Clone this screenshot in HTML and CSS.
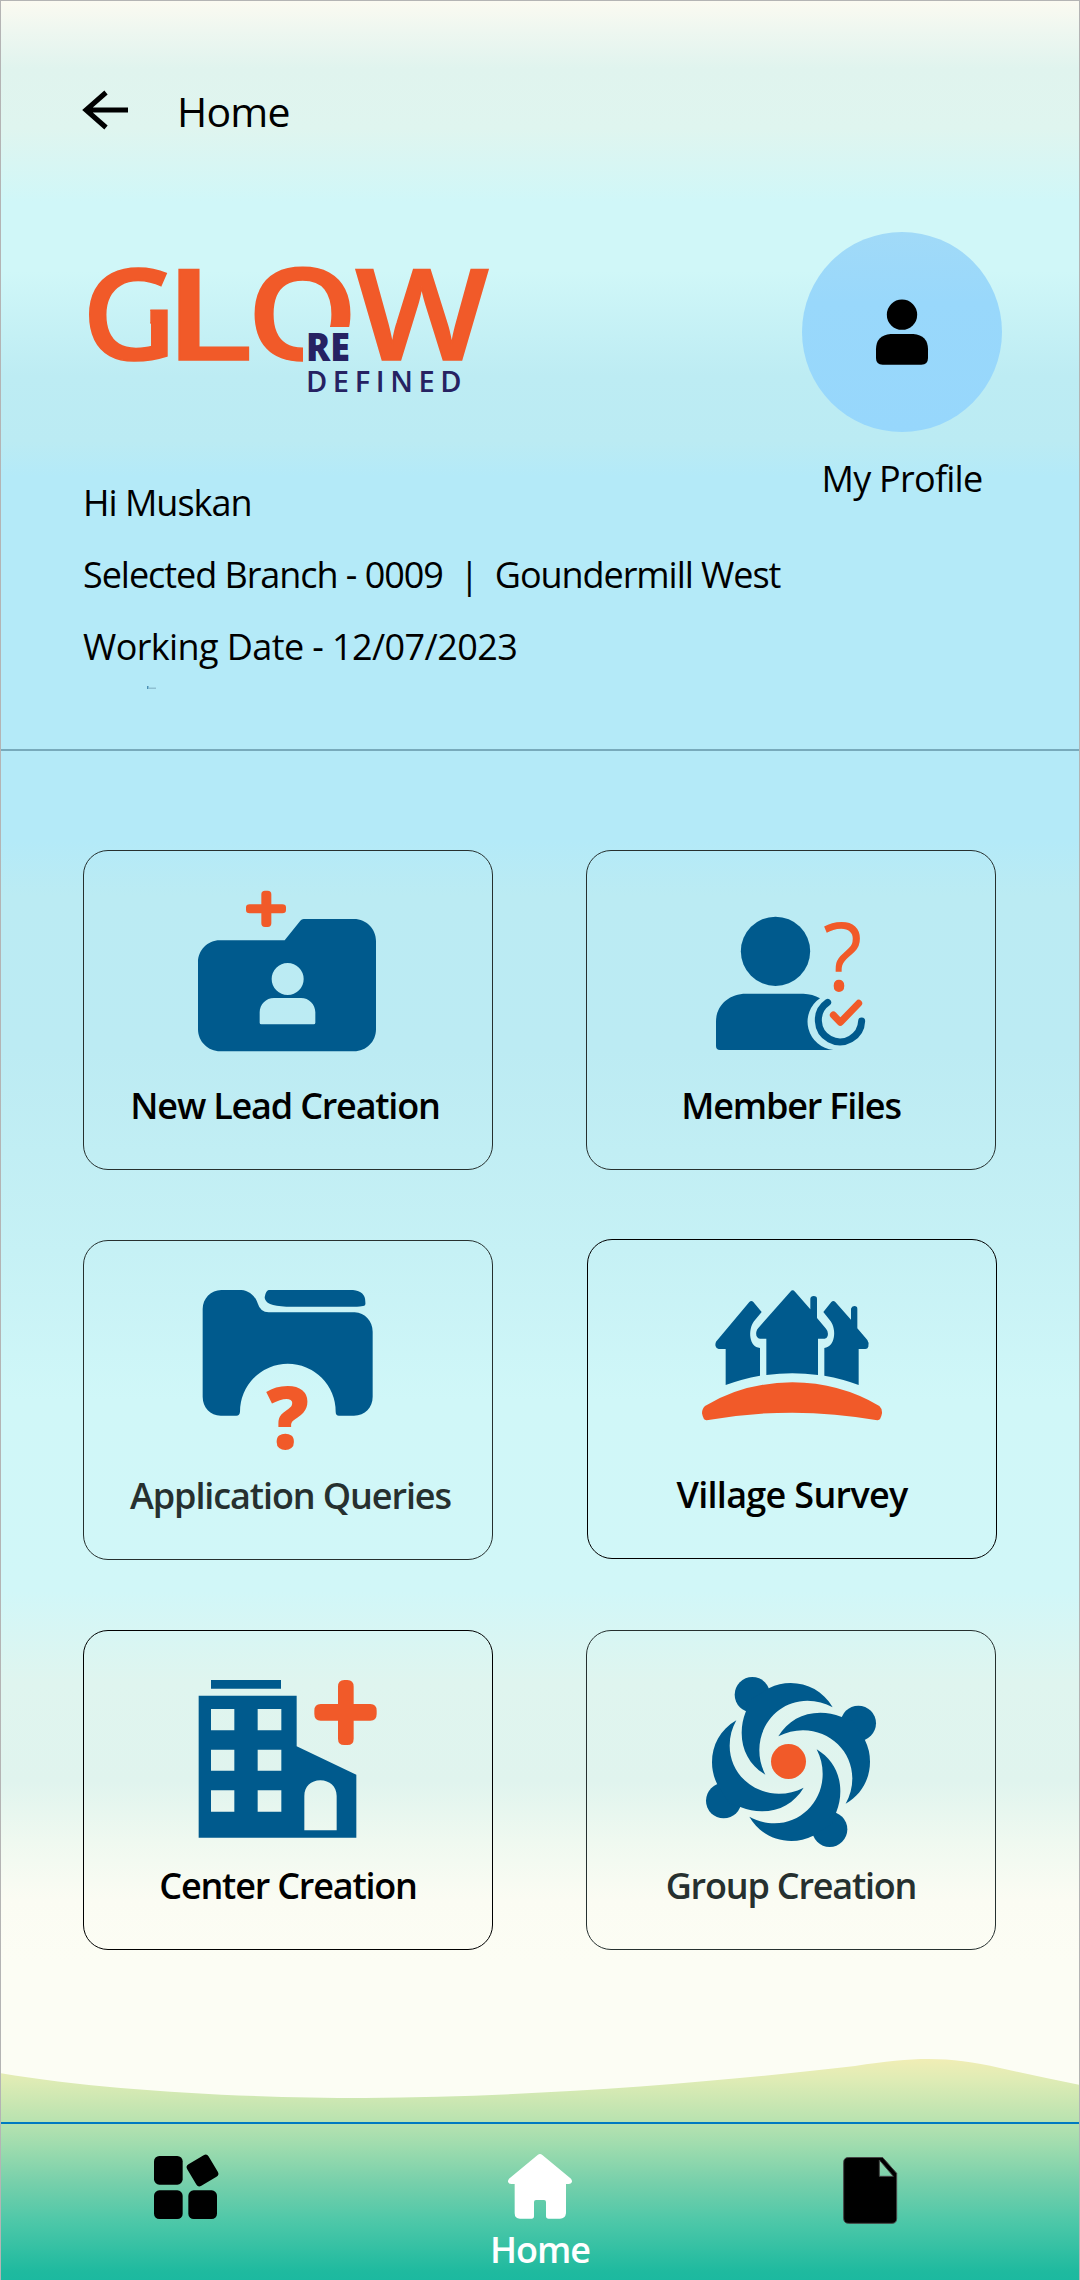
FILE: index.html
```
<!DOCTYPE html>
<html lang="en">

<head>
	<meta charset="utf-8" />
	<meta name="viewport" content="width=device-width" />
	<title>Home</title>
	<link rel="stylesheet" href="styles.css">
</head>

<body>
	<div class="page">
		<header class="topbar">
			<svg class="back" viewBox="0 0 46 40" width="46" height="40">
				<path d="M45 20H4M23 2.500L3 20l20 17.500" fill="none" stroke="#000" stroke-width="5" />
			</svg>
			<h1>Home</h1>
		</header>

		<section class="intro">
			<div class="intro-main">
				<svg class="logo" viewBox="83 260 410 140" width="410" height="140">
					<clipPath id="g-cut"><path d="M70 250H180V380H70ZM125 300V334H150.300V300Z" clip-rule="evenodd" /></clipPath>
					<clipPath id="o-cut"><path d="M240 250H360V327H303V380H240Z" /></clipPath>
					<g class="logo-glow">
						<text x="82" y="360" textLength="95" lengthAdjust="spacingAndGlyphs" clip-path="url(#g-cut)">G</text>
						<text x="164" y="360" textLength="89" lengthAdjust="spacingAndGlyphs">L</text>
						<text x="247" y="360" textLength="111" lengthAdjust="spacingAndGlyphs" clip-path="url(#o-cut)">O</text>
						<text x="355" y="360" textLength="134" lengthAdjust="spacingAndGlyphs">W</text>
					</g>
					<text class="logo-re" x="306" y="361" textLength="44" lengthAdjust="spacingAndGlyphs">RE</text>
					<text class="logo-defined" x="306" y="392">DEFINED</text>
				</svg>
				<p class="hi">Hi Muskan</p>
				<p class="branch">Selected Branch - 0009&nbsp; |&nbsp; Goundermill West</p>
				<p class="date">Working Date - 12/07/2023</p>
				<svg class="speck" viewBox="0 0 10 4" width="10" height="4">
					<path d="M0 0h1.500v3H0z" fill="#4a90b4" />
					<path d="M2 1.500h7v1.500H2z" fill="#8fc0d2" />
				</svg>
			</div>
			<div class="profile">
				<div class="avatar">
					<svg viewBox="348 296 156 196" width="52" height="66">
						<circle cx="426" cy="342" r="45.500" />
						<path d="M392 400H460Q504 404 504 446V472Q504 492 484 492H368Q348 492 348 472V446Q348 404 392 400Z" />
					</svg>
				</div>
				<span>My Profile</span>
			</div>
		</section>

		<main class="cards">
			<a class="card">
				<svg class="icon" viewBox="43 63 1224 660">
					<path class="blue" fill-rule="evenodd" d="M450 331H645L692 272Q696 267 702 267H853C890 267 919 297 919 333V598C919 635 890 664 853 664H452C415 664 385 635 385 598V397C385 361 414 331 450 331ZM654 399A48 48 0 1 0 654 495A48 48 0 1 0 654 399ZM613 504C589 504 570 523 570 547V578Q570 583 575 583H732Q737 583 737 578V547C737 523 718 504 694 504Z" />
					<path class="orange" d="M575 193Q575 182 586 182H594Q605 182 605 193V223H638Q649 223 649 232V240Q649 250 638 250H605V280Q605 291 594 291H586Q575 291 575 280V250H540Q529 250 529 240V232Q529 223 540 223H575Z" />
				</svg>
				<span class="label lead">New Lead Creation</span>
			</a>
			<a class="card">
				<svg class="icon" viewBox="51 63 1224 660">
					<circle class="blue" cx="616.500" cy="364" r="104" />
					<path class="blue" d="M438 575C438 525 478 491 528 491H700Q728 492 750 505A85 85 0 0 0 790 660H450Q438 660 438 648Z" />
					<path class="ring" d="M773 517A65 65 0 1 0 875 573" />
					<path class="check" d="M790 555L811 577L866 520" />
					<text class="mark thin" x="758" y="483" textLength="119" lengthAdjust="spacingAndGlyphs">?</text>
				</svg>
				<span class="label member">Member Files</span>
			</a>
			<a class="card">
				<svg class="icon" viewBox="43 63 1224 660">
					<path class="blue" d="M455 210H515C540 212 558 230 564 250Q572 277 597 277H855C886 279 909 303 909 335V530C909 562 886 587 853 587H808Q798 587 798 575A143.500 143.500 0 0 0 511 575Q510 587 500 587H453C422 587 399 562 399 530V267C399 235 424 211 455 210Z" />
					<path class="blue" d="M597 210H850Q887 214 887 245Q889 258 880 258Q870 260 862 260H650Q585 258 585 232Q588 212 597 210Z" />
					<text class="mark heavy" x="590" y="686" textLength="128" lengthAdjust="spacingAndGlyphs">?</text>
				</svg>
				<span class="label queries">Application Queries</span>
			</a>
			<a class="card village">
				<svg class="icon" viewBox="54 60 1224 660">
					<path class="blue" d="M661 215Q668 207 675 215L721 268V236Q722 228 731 228Q741 228 741 236V294L768 326Q776 335 773 348Q770 356 764 356H744V465Q667 455 589 465V356H570Q556 353 559 335Q561 328 565 324Z" />
					<path class="blue" d="M538 246Q544 240 550 246L575 276L552 304C533 330 537 382 570 384V467Q515 477 467 495V387H446Q431 382 438 365Z" />
					<path class="blue" d="M784 246Q790 240 796 246L843 299V266Q845 258 853 258Q862 258 862 266V325L892 360Q899 370 895 380Q893 387 886 387H866V495Q820 477 763 467V384C796 380 800 330 782 304L760 276Z" />
					<path class="orange" d="M405 558Q520 488 667 487Q810 488 928 558Q937 566 936 580Q932 602 922 601Q667 555 410 601Q400 602 396 580Q396 566 405 558Z" />
				</svg>
				<span class="label survey">Village Survey</span>
			</a>
			<a class="card center">
				<svg class="icon" viewBox="43 63 1224 660">
					<path class="blue" d="M424 210H634V236H424Z" />
					<path class="blue" fill-rule="evenodd" d="M387 257H681V409L860 494V683H387ZM424 297H494V361H424ZM564 297H635V361H564ZM424 419H494V482H424ZM564 419H635V482H564ZM424 541H494V605H424ZM564 541H635V605H564ZM704 661V558C704 530 724 511 752 511S801 530 801 558V661Z" />
					<path class="orange" d="M805 230Q805 210 824 210H833Q852 210 852 230V282H902Q921 282 921 302V312Q921 332 902 332H852V386Q852 405 833 405H824Q805 405 805 386V332H753Q734 332 734 312V302Q734 282 753 282H805Z" />
				</svg>
				<span class="label">Center Creation</span>
			</a>
			<a class="card">
				<svg class="icon" viewBox="51 63 1224 660">
					<defs>
						<g id="person">
							<circle cx="547" cy="254" r="53" />
							<path d="M540 270L598 234Q628 219 662 219C712 219 760 243 788 292C765 279 740 272 712 272C632 272 568 338 568 420C568 446 574 470 586 494C540 466 515 422 515 368Q515 336 527 306Z" />
						</g>
					</defs>
					<g class="blue">
						<use href="#person" />
						<use href="#person" transform="rotate(90 663 456)" />
						<use href="#person" transform="rotate(180 663 456)" />
						<use href="#person" transform="rotate(270 663 456)" />
					</g>
					<circle class="orange" cx="655.500" cy="454.500" r="52.500" />
				</svg>
				<span class="label group">Group Creation</span>
			</a>
		</main>

		<footer class="footer">
			<svg class="hills" viewBox="0 2056 1080 224" width="1080" height="224">
				<defs>
					<linearGradient id="grass" gradientUnits="userSpaceOnUse" x1="0" y1="2056" x2="0" y2="2280">
						<stop offset="0" stop-color="#f3eeb5" />
						<stop offset="0.100" stop-color="#e0ecb5" />
						<stop offset="0.280" stop-color="#bbe3b0" />
						<stop offset="0.400" stop-color="#9fdcae" />
						<stop offset="0.560" stop-color="#78d0ab" />
						<stop offset="0.750" stop-color="#4bc7a8" />
						<stop offset="0.960" stop-color="#1fba9f" />
						<stop offset="1" stop-color="#1cb9a0" />
					</linearGradient>
				</defs>
				<path fill="url(#grass)" d="M0 2073C100 2090 240 2098 365 2098C540 2097 720 2082 855 2066C920 2056 950 2057 1000 2068Q1040 2077 1080 2085V2280H0Z" />
			</svg>
			<nav class="nav">
				<a>
					<svg viewBox="42 36 198 204" width="66" height="68">
						<rect x="42" y="48" width="86" height="86" rx="16" />
						<rect x="42" y="151" width="86" height="86" rx="16" />
						<rect x="145" y="151" width="86" height="86" rx="16" />
						<rect x="150" y="54" width="75" height="75" rx="11" transform="rotate(-31 187.500 91.500)" />
					</svg>
				</a>
				<a class="active">
					<svg viewBox="81 126 198 204" width="66" height="68">
						<path fill="#fff" d="M173 135Q180 129 187 135L273 206C280 216 274 222 266 222H258V310Q256 326 240 326H206Q198 326 198 318V276Q198 270 192 270H168Q162 270 162 276V318Q162 326 155 326H120Q104 326 104 310V222H94C86 222 80 216 87 206Z" />
					</svg>
					<span>Home</span>
				</a>
				<a>
					<svg viewBox="1071 126 198 219" width="66" height="73">
						<path fill-rule="evenodd" stroke="#444" stroke-width="3" d="M1106 142.500H1208L1250 190V325Q1250 340 1236 340H1106Q1091 340 1091 325V157Q1091 142.500 1106 142.500ZM1198 150V199H1240Z" />
					</svg>
				</a>
			</nav>
		</footer>
	</div>
</body>

</html>
```
FILE: styles.css
```
* {
	box-sizing: border-box;
}

body {
	margin: 0;
	font-family: "Open Sans", "Noto Sans", sans-serif;
	font-size: 36px;
	color: #000;
}

svg {
	display: block;
	overflow: visible;
}

p, h1 {
	margin: 0;
	font-weight: 400;
}

.page {
	width: 1080px;
	height: 2280px;
	display: flex;
	flex-direction: column;
	overflow: hidden;
	border: 1px solid #b4b4b4;
	border-bottom: 0;
	background: linear-gradient(#fbfaf1 0, #eef7f0 30px, #e0f4ee 68px, #dff5ef 128px, #d0f7f8 200px, #d0f7f8 270px, #bdecf3 375px, #bbebf3 440px, #b4eaf8 475px, #b4eaf8 840px, #bbebf3 895px, #bcebf3 1050px, #c6f1f5 1250px, #d0f7f8 1400px, #d1f7f8 1590px, #dff5ef 1680px, #e0f4ee 1780px, #eff9f0 1840px, #fbfcf3 1900px, #fcfdf4 1960px);
}

.topbar {
	display: flex;
	align-items: center;
	gap: 48px;
	height: 220px;
	padding: 0 0 0 82px;
}

.back {
	margin-bottom: 2px;
}

.topbar h1 {
	font-size: 41px;
	letter-spacing: -0.8px;
}

.intro {
	display: flex;
	justify-content: space-between;
	height: 530px;
	padding: 11px 77px 0 82px;
	border-bottom: 2px solid #78aabb;
}

.logo {
	margin-top: 28px;
	margin-bottom: 67px;
}

.logo-glow {
	font-size: 127px;
	font-weight: 600;
	fill: #f15a29;
	stroke: #f15a29;
	stroke-width: 1.5px;
}

.logo-re {
	font-size: 39px;
	font-weight: 800;
	fill: #262262;
}

.logo-defined {
	font-size: 29px;
	font-weight: 600;
	letter-spacing: 5.6px;
	fill: #262262;
}

.intro-main {
	width: 700px;
}

.intro p {
	height: 72px;
	line-height: 72px;
	white-space: nowrap;
}

.hi {
	letter-spacing: -1px;
}

.branch {
	letter-spacing: -1.05px;
}

.date {
	letter-spacing: -0.6px;
}

.speck {
	margin: 3px 0 0 64px;
}

.profile {
	display: flex;
	flex-direction: column;
	align-items: center;
	width: 200px;
	letter-spacing: -0.75px;
	white-space: nowrap;
}

.avatar {
	display: flex;
	align-items: center;
	justify-content: center;
	width: 200px;
	height: 200px;
	border-radius: 50%;
	background: linear-gradient(#a1daf8, #99d8fb 35%, #97d7fc);
}

.profile span {
	margin-top: 22px;
}

.cards {
	display: grid;
	grid-template-columns: 410px 410px;
	grid-auto-rows: 320px;
	gap: 70px 93px;
	padding: 99px 0 0 82px;
}

.card {
	display: flex;
	flex-direction: column;
	align-items: center;
	border: 1px solid #26302f;
	border-radius: 25px;
	color: #000;
}

.card.village {
	border-color: #000;
	margin: -1px -1px 1px 1px;
}

.card.center {
	border-color: #000;
}

.icon {
	width: 408px;
	height: 220px;
}

.blue {
	fill: #005a8d;
}

.orange, .mark {
	fill: #f15a29;
}

.ring, .check {
	fill: none;
	stroke: #005a8d;
	stroke-width: 21;
	stroke-linecap: round;
	stroke-linejoin: round;
}

.check {
	stroke: #f15a29;
}

.mark.thin {
	font-size: 288px;
	font-weight: 500;
}

.mark.heavy {
	font-size: 262px;
	font-weight: 800;
}

.label {
	margin-top: 10px;
	font-weight: 600;
	line-height: 50px;
	letter-spacing: -1.2px;
	white-space: nowrap;
}

.lead {
	margin-right: 6px;
}

.queries {
	margin-left: 5px;
	letter-spacing: -1.1px;
}

.survey {
	letter-spacing: -0.7px;
}

.queries, .group {
	color: #26302f;
}

.footer {
	display: grid;
	width: 1080px;
	margin: auto 0 0 -1px;
}

.hills, .nav {
	grid-area: 1 / 1;
}

.nav {
	align-self: end;
	display: grid;
	grid-template-columns: 374px 332px 328px;
	height: 158px;
	padding-top: 28px;
	border-top: 2px solid #007ac0;
}

.nav a {
	display: flex;
	flex-direction: column;
	align-items: center;
	color: #fff;
	font-weight: 600;
}

.nav span {
	line-height: 50px;
	margin-top: 5px;
	letter-spacing: -1px;
}
```
